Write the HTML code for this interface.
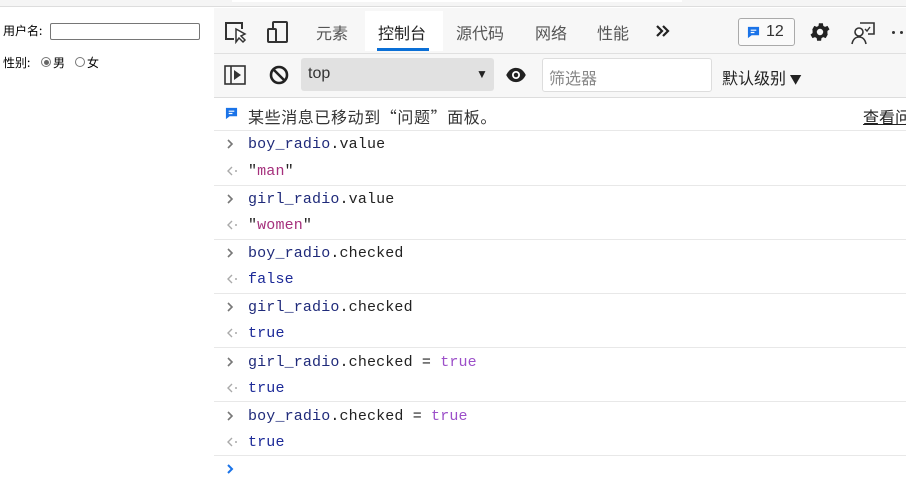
<!DOCTYPE html>
<html><head><meta charset="utf-8"><style>
*{margin:0;padding:0;box-sizing:border-box}
body{width:906px;height:487px;overflow:hidden;background:#fff;font-family:"Liberation Sans","Noto Sans CJK SC",sans-serif;position:relative}
.a{position:absolute}
.cjk{font-family:"Microsoft YaHei","Noto Sans CJK SC",sans-serif}
.mono{font-family:"Liberation Mono",monospace;font-size:15px;letter-spacing:0.15px}
.row{position:absolute;left:214px;width:692px;height:27px;line-height:27px}
.sep{position:absolute;left:214px;width:692px;height:1px;background:#e8e8e8}
.k{color:#1f2a7a}.p{color:#222}.s{color:#a5307c}.t{color:#9c4fc9}.r{color:#1c2a98}
.ch{position:absolute;left:226px}
</style></head><body>
<div class="a" style="left:0;top:0;width:906px;height:7px;background:#f5f5f5;border-bottom:1px solid #ddd"></div>
<div class="a" style="left:232px;top:0;width:450px;height:2px;background:#fff"></div>
<!-- left page -->
<div class="a cjk" style="left:3px;top:22px;font-size:12px;color:#000">用户名:</div>
<div class="a" style="left:50px;top:23px;width:150px;height:17px;border:1px solid #767676;border-radius:2px"></div>
<div class="a cjk" style="left:3px;top:54px;font-size:12px;color:#000">性别:</div>
<div class="a" style="left:41px;top:57px;width:10px;height:10px;border:1px solid #777;border-radius:50%"><div style="margin:1.5px;width:5px;height:5px;border-radius:50%;background:#666"></div></div>
<div class="a cjk" style="left:53px;top:54px;font-size:12px">男</div>
<div class="a" style="left:75px;top:57px;width:10px;height:10px;border:1px solid #777;border-radius:50%"></div>
<div class="a cjk" style="left:87px;top:54px;font-size:12px">女</div>
<!-- devtools toolbar -->
<div class="a" style="left:214px;top:8px;width:692px;height:46px;background:#f7f7f7;border-bottom:1px solid #e0e0e0"></div>
<svg class="a" style="left:224px;top:20px" width="24" height="24" viewBox="0 0 24 24"><path d="M18 9V3H2v16h8" fill="none" stroke="#333" stroke-width="2"/><path d="M12 9l0 13 3-4 4 4 2-2-4-4 4-2z" fill="#fff" stroke="#333" stroke-width="1.5"/></svg>
<svg class="a" style="left:266px;top:20px" width="24" height="24" viewBox="0 0 24 24"><rect x="7" y="2" width="14" height="20" rx="1" fill="none" stroke="#333" stroke-width="2"/><rect x="2" y="9" width="8" height="13" rx="1" fill="#f7f7f7" stroke="#333" stroke-width="2"/></svg>
<div class="a cjk" style="left:316px;top:20px;font-size:16px;color:#555">元素</div>
<div class="a" style="left:365px;top:11px;width:78px;height:40px;background:#fff"></div>
<div class="a" style="left:377px;top:48px;width:52px;height:3px;background:#0a6fd6"></div>
<div class="a cjk" style="left:378px;top:20px;font-size:16px;color:#222">控制台</div>
<div class="a cjk" style="left:456px;top:20px;font-size:16px;color:#555">源代码</div>
<div class="a cjk" style="left:535px;top:20px;font-size:16px;color:#555">网络</div>
<div class="a cjk" style="left:597px;top:20px;font-size:16px;color:#555">性能</div>
<svg class="a" style="left:656px;top:25px" width="14" height="12" viewBox="0 0 14 12"><path d="M1 1l5 5-5 5M7 1l5 5-5 5" fill="none" stroke="#222" stroke-width="2.2"/></svg>
<div class="a" style="left:738px;top:18px;width:57px;height:28px;border:1px solid #aaa;border-radius:3px;background:#fafafa"></div>
<svg class="a" style="left:747px;top:26px" width="13" height="13" viewBox="0 0 14 14"><path d="M1 1h12v9H5l-4 3z" fill="#1a73e8"/><path d="M4 4.5h6M4 7h4" stroke="#fff" stroke-width="1.3"/></svg>
<div class="a" style="left:766px;top:23px;font-size:16px;color:#333">12</div>
<svg class="a" style="left:808px;top:20px" width="24" height="24" viewBox="0 0 24 24"><path fill="#222" d="M19.4 13a7.5 7.5 0 000-2l2.1-1.6-2-3.5-2.5 1a7 7 0 00-1.7-1l-.4-2.7h-4l-.4 2.7a7 7 0 00-1.7 1l-2.5-1-2 3.5L4.6 11a7.5 7.5 0 000 2l-2.1 1.6 2 3.5 2.5-1a7 7 0 001.7 1l.4 2.7h4l.4-2.7a7 7 0 001.7-1l2.5 1 2-3.5zM12 15.2A3.2 3.2 0 1112 8.8a3.2 3.2 0 010 6.4z"/></svg>
<svg class="a" style="left:850px;top:20px" width="26" height="26" viewBox="0 0 26 26"><path d="M10 3h14v11h-6" fill="none" stroke="#333" stroke-width="1.6"/><circle cx="9" cy="12" r="4" fill="#fff" stroke="#333" stroke-width="1.6"/><path d="M2 24c1-5 4-7 7-7s6 2 7 7" fill="none" stroke="#333" stroke-width="1.6"/><path d="M15 9l2 2 3-4" fill="none" stroke="#333" stroke-width="1.4"/></svg>
<div class="a" style="left:892px;top:24px;width:3px;height:3px;background:#333;border-radius:50%;top:31px"></div>
<div class="a" style="left:900px;top:31px;width:3px;height:3px;background:#333;border-radius:50%"></div>
<!-- second toolbar -->
<div class="a" style="left:214px;top:54px;width:692px;height:44px;background:#f7f7f7;border-bottom:1px solid #ddd"></div>
<svg class="a" style="left:224px;top:65px" width="22" height="20" viewBox="0 0 22 20"><rect x="1" y="1" width="20" height="18" fill="none" stroke="#333" stroke-width="1.6"/><path d="M7 1v18" stroke="#333" stroke-width="1.6"/><path d="M10 5l7 5-7 5z" fill="#333"/></svg>
<svg class="a" style="left:268px;top:64px" width="22" height="22" viewBox="0 0 22 22"><circle cx="11" cy="11" r="8" fill="none" stroke="#222" stroke-width="2.6"/><path d="M5.5 5.5l11 11" stroke="#222" stroke-width="2.6"/></svg>
<div class="a" style="left:301px;top:58px;width:193px;height:33px;background:#e1e1e1;border-radius:3px"></div>
<div class="a" style="left:308px;top:65px;font-size:16px;color:#333">top</div>
<div class="a" style="left:476px;top:67px;font-size:12px;color:#222">▼</div>
<svg class="a" style="left:505px;top:67px" width="22" height="16" viewBox="0 0 24 18"><path d="M1 9C4 3 8 1 12 1s8 2 11 8c-3 6-7 8-11 8S4 15 1 9z" fill="#222"/><circle cx="12" cy="9" r="4.5" fill="#fff"/><circle cx="12" cy="9" r="2.5" fill="#222"/></svg>
<div class="a" style="left:542px;top:58px;width:170px;height:34px;background:#fff;border:1px solid #ddd;border-radius:3px"></div>
<div class="a cjk" style="left:549px;top:65px;font-size:16px;color:#888">筛选器</div>
<div class="a cjk" style="left:722px;top:65px;font-size:16px;color:#222">默认级别 <span style="font-size:12px">▼</span></div>
<!-- message row -->
<svg class="a" style="left:225px;top:107px" width="13" height="13" viewBox="0 0 14 14"><path d="M1 1h12v9H5l-4 3z" fill="#1a73e8"/><path d="M4 4.5h6M4 7h4" stroke="#fff" stroke-width="1.3"/></svg>
<div class="a cjk" style="left:248px;top:104px;font-size:16px;color:#333;letter-spacing:0.6px">某些消息已移动到“问题”面板。</div>
<div class="a cjk" style="left:863px;top:104px;font-size:16px;color:#222;text-decoration:underline;white-space:nowrap">查看问</div>
<div class="sep" style="top:130px"></div>
<!-- console rows -->
<svg width="0" height="0" style="position:absolute"><defs>
<symbol id="in" viewBox="0 0 10 12"><path d="M2 2l4 4-4 4" fill="none" stroke="#777" stroke-width="1.6"/></symbol>
<symbol id="out" viewBox="0 0 12 12"><path d="M6 2L2 6l4 4" fill="none" stroke="#aaa" stroke-width="1.4"/><circle cx="10" cy="6" r="1" fill="#aaa"/></symbol>
</defs></svg>
<div class="mono">
<svg class="ch" style="top:138px" width="10" height="12"><use href="#in"/></svg><div class="row" style="top:131px;padding-left:34px"><span class="k">boy_radio</span><span class="p">.value</span></div>
<svg class="ch" style="top:165px" width="12" height="12"><use href="#out"/></svg><div class="row" style="top:158px;padding-left:34px"><span class="p">"</span><span class="s">man</span><span class="p">"</span></div>
<div class="sep" style="top:185px"></div>
<svg class="ch" style="top:193px" width="10" height="12"><use href="#in"/></svg><div class="row" style="top:186px;padding-left:34px"><span class="k">girl_radio</span><span class="p">.value</span></div>
<svg class="ch" style="top:219px" width="12" height="12"><use href="#out"/></svg><div class="row" style="top:212px;padding-left:34px"><span class="p">"</span><span class="s">women</span><span class="p">"</span></div>
<div class="sep" style="top:239px"></div>
<svg class="ch" style="top:247px" width="10" height="12"><use href="#in"/></svg><div class="row" style="top:240px;padding-left:34px"><span class="k">boy_radio</span><span class="p">.checked</span></div>
<svg class="ch" style="top:273px" width="12" height="12"><use href="#out"/></svg><div class="row" style="top:266px;padding-left:34px"><span class="r">false</span></div>
<div class="sep" style="top:293px"></div>
<svg class="ch" style="top:301px" width="10" height="12"><use href="#in"/></svg><div class="row" style="top:294px;padding-left:34px"><span class="k">girl_radio</span><span class="p">.checked</span></div>
<svg class="ch" style="top:327px" width="12" height="12"><use href="#out"/></svg><div class="row" style="top:320px;padding-left:34px"><span class="r">true</span></div>
<div class="sep" style="top:347px"></div>
<svg class="ch" style="top:356px" width="10" height="12"><use href="#in"/></svg><div class="row" style="top:349px;padding-left:34px"><span class="k">girl_radio</span><span class="p">.checked = </span><span class="t">true</span></div>
<svg class="ch" style="top:382px" width="12" height="12"><use href="#out"/></svg><div class="row" style="top:375px;padding-left:34px"><span class="r">true</span></div>
<div class="sep" style="top:401px"></div>
<svg class="ch" style="top:410px" width="10" height="12"><use href="#in"/></svg><div class="row" style="top:403px;padding-left:34px"><span class="k">boy_radio</span><span class="p">.checked = </span><span class="t">true</span></div>
<svg class="ch" style="top:436px" width="12" height="12"><use href="#out"/></svg><div class="row" style="top:429px;padding-left:34px"><span class="r">true</span></div>
<div class="sep" style="top:455px"></div>
<svg class="ch" style="top:463px" width="10" height="12" viewBox="0 0 10 12"><path d="M2 2l4 4-4 4" fill="none" stroke="#1a73e8" stroke-width="2"/></svg>
</div>
</body></html>
